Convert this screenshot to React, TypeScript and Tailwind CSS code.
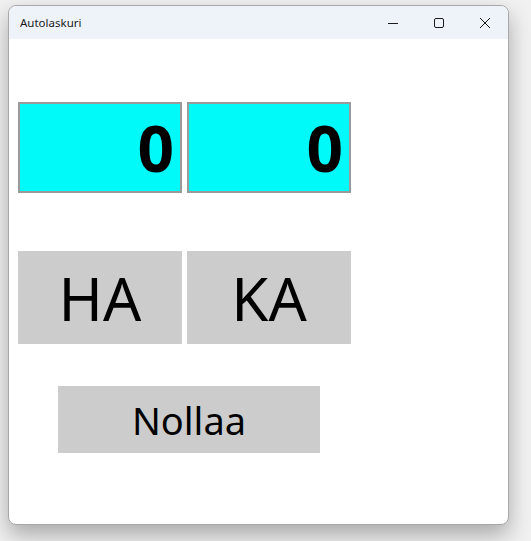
import { useState } from "react";

const font = { fontFamily: '"Noto Sans", "Open Sans", sans-serif' };

function TitleBar() {
  return (
    <div className="h-[33px] bg-[#eef3f9] flex items-center pl-[11px] text-[11.5px] text-[#1a1a1a] rounded-t-[8px]">
      <span className="flex-1">Autolaskuri</span>
      <div className="flex items-center h-full">
        <div className="w-[46px] h-full flex items-center justify-center">
          <svg width="12" height="12" viewBox="0 0 12 12">
            <path d="M1 6.5h10" stroke="#1a1a1a" strokeWidth="1" />
          </svg>
        </div>
        <div className="w-[46px] h-full flex items-center justify-center">
          <svg width="12" height="12" viewBox="0 0 12 12">
            <rect x="1.5" y="1.5" width="9" height="9" rx="1.5" fill="none" stroke="#1a1a1a" strokeWidth="1" />
          </svg>
        </div>
        <div className="w-[46px] h-full flex items-center justify-center">
          <svg width="12" height="12" viewBox="0 0 12 12">
            <path d="M1 1l10 10M11 1L1 11" stroke="#1a1a1a" strokeWidth="1" />
          </svg>
        </div>
      </div>
    </div>
  );
}

export default function App() {
  const [ha, setHa] = useState(0);
  const [ka, setKa] = useState(0);

  return (
    <div className="w-[531px] h-[541px] bg-[#f1f1f1] pt-[5px] pl-[8px]" style={font}>
      <div className="w-[501px] h-[520px] bg-white border border-[#a8a8a8] rounded-[8px] shadow-[0_10px_22px_rgba(0,0,0,0.3)] flex flex-col">
        <TitleBar />
        <div className="flex flex-col pl-[9px] pt-[63px]">
          <div className="flex gap-[5px]">
            <div className="w-[164px] h-[91px] bg-[#00fafa] border-2 border-[#9a9a9a] flex items-center justify-end pr-[6px] text-[64px] font-bold leading-none text-black">
              {ha}
            </div>
            <div className="w-[164px] h-[91px] bg-[#00fafa] border-2 border-[#9a9a9a] flex items-center justify-end pr-[6px] text-[64px] font-bold leading-none text-black">
              {ka}
            </div>
          </div>
          <div className="flex gap-[5px] mt-[58px]">
            <button
              onClick={() => setHa(ha + 1)}
              className="w-[164px] h-[93px] bg-[#cccccc] flex items-center justify-center text-[60px] leading-none text-black"
            >
              HA
            </button>
            <button
              onClick={() => setKa(ka + 1)}
              className="w-[164px] h-[93px] bg-[#cccccc] flex items-center justify-center text-[60px] leading-none text-black"
            >
              KA
            </button>
          </div>
          <button
            onClick={() => {
              setHa(0);
              setKa(0);
            }}
            className="ml-[40px] mt-[42px] w-[262px] h-[67px] bg-[#cccccc] flex items-center justify-center text-[38px] leading-none text-black"
          >
            Nollaa
          </button>
        </div>
      </div>
    </div>
  );
}
